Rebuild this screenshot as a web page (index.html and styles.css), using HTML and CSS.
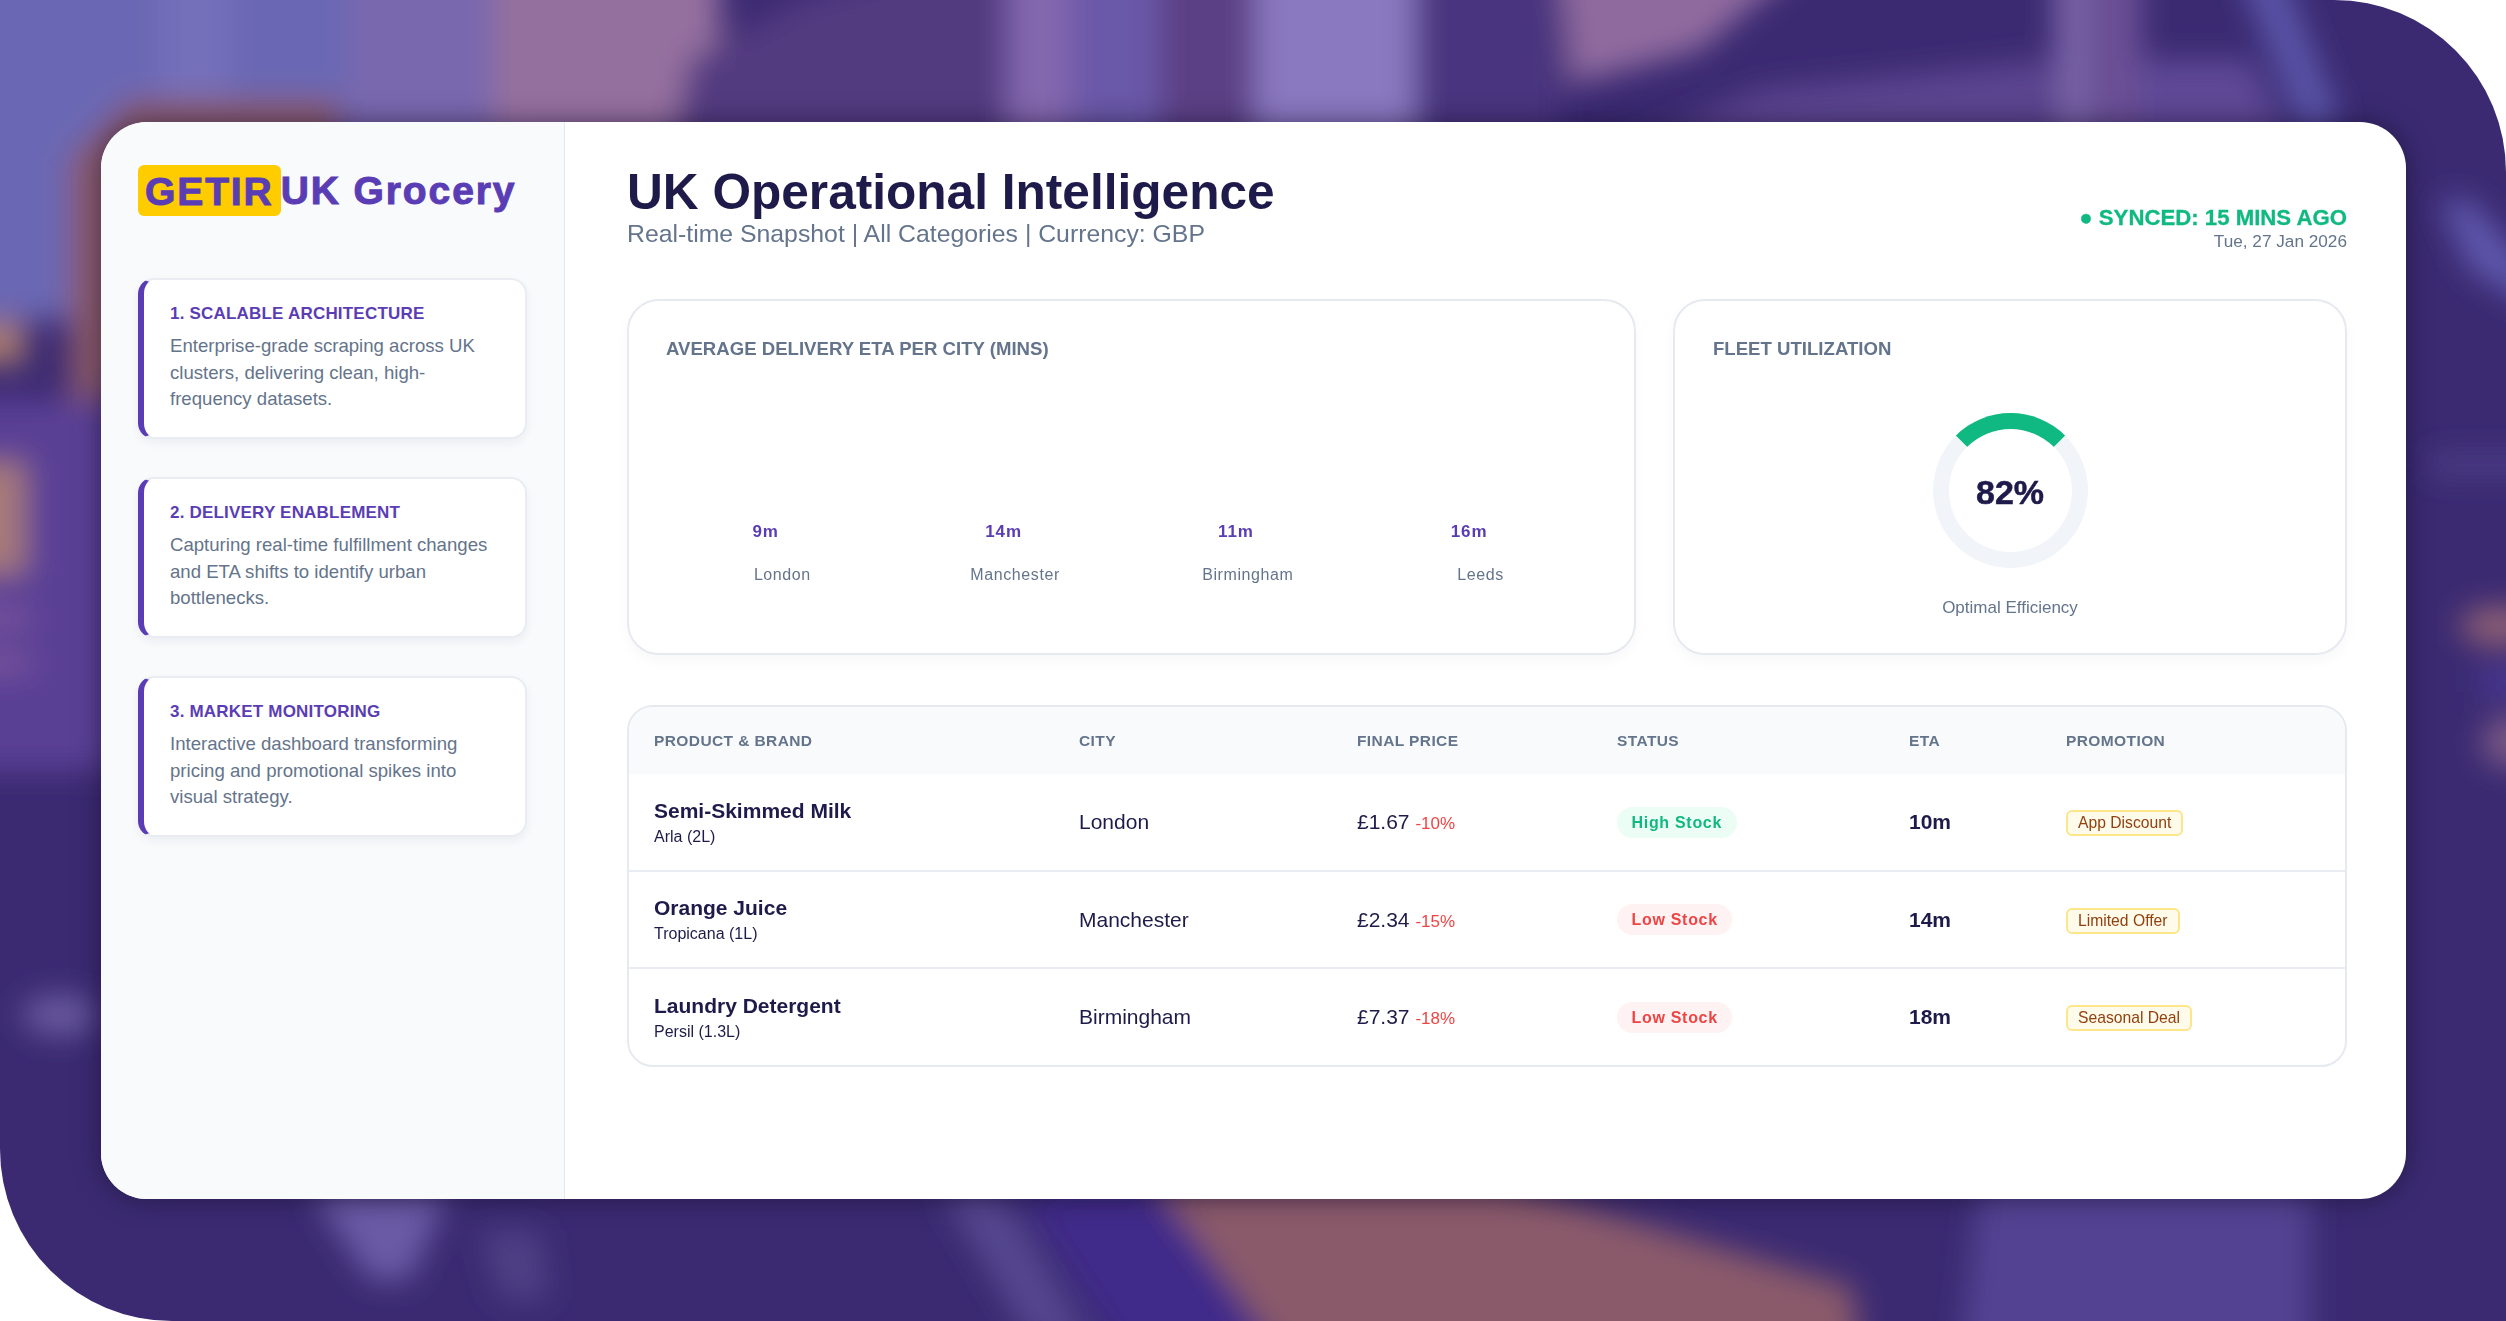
FILE: index.html
```html
<!DOCTYPE html>
<html lang="en">
<head>
  <meta charset="UTF-8">
  <meta name="viewport" content="width=device-width, initial-scale=1.0">
  <title>UK Operational Intelligence</title>
  <link rel="stylesheet" href="styles.css">
</head>
<body>
  <div class="frame">
    <!-- blurred photo behind the dashboard -->
    <svg class="backdrop" viewBox="0 0 2506 1321" preserveAspectRatio="none" aria-hidden="true">
      <defs>
        <filter id="soft" x="-5%" y="-5%" width="110%" height="110%"><feGaussianBlur stdDeviation="15"/></filter>
      </defs>
      <rect width="2506" height="1321" fill="#3b2a72"/>
      <g filter="url(#soft)">
        <rect x="-60" y="-60" width="570" height="380" fill="#6b67b4"/>
        <rect x="160" y="-60" width="70" height="250" fill="#7470ba"/>
        <rect x="350" y="-60" width="130" height="300" fill="#7a68ae"/>
        <rect x="490" y="-60" width="230" height="210" fill="#94709f"/>
        <polygon points="670,160 690,60 800,0 1000,-60 1000,160" fill="#523a80"/>
        <rect x="1005" y="-60" width="65" height="210" fill="#8468ae"/>
        <rect x="1070" y="-60" width="90" height="210" fill="#6a58a8"/>
        <rect x="1160" y="-60" width="95" height="210" fill="#5b4085"/>
        <rect x="1255" y="-60" width="160" height="210" fill="#8a78c0"/>
        <rect x="1415" y="-60" width="145" height="210" fill="#4a347f"/>
        <polygon points="1557,-60 1830,-60 1700,50 1570,85" fill="#8f6a9f"/>
        <polygon points="1600,160 1760,90 2050,60 2050,160" fill="#5c4590"/>
        <rect x="2055" y="-60" width="35" height="210" fill="#7c65a8"/>
        <rect x="2092" y="-60" width="50" height="210" fill="#6a4f95"/>
        <polygon points="2140,160 2140,60 2250,60 2300,160" fill="#5f4896"/>
        <polygon points="2225,-60 2270,-60 2340,120 2310,150" fill="#5a55a8"/>
        <polygon points="130,100 340,100 340,160 110,400 70,400 70,160" fill="#8a5a6a"/>
        <rect x="-60" y="322" width="85" height="42" fill="#a97c6e"/>
        <rect x="-60" y="400" width="180" height="370" fill="#5a4095"/>
        <rect x="-60" y="462" width="85" height="112" fill="#a87a78"/>
        <rect x="-60" y="612" width="90" height="12" fill="#8b5fa0"/>
        <rect x="-60" y="657" width="90" height="12" fill="#8b5fa0"/>
        <ellipse cx="60" cy="1015" rx="38" ry="20" fill="#6a5aa0"/>
        <polygon points="2440,200 2470,200 2540,280 2540,310 2470,270" fill="#5f59ad"/>
        <rect x="2430" y="455" width="120" height="20" fill="#4f4088"/>
        <ellipse cx="2500" cy="626" rx="40" ry="20" fill="#8f6075"/>
        <rect x="2480" y="670" width="70" height="24" fill="#4a3b9a"/>
        <ellipse cx="2510" cy="742" rx="28" ry="26" fill="#7a5a85"/>
        <polygon points="310,1190 450,1190 410,1280 370,1280" fill="#6a5aa5"/>
        <polygon points="480,1230 540,1230 550,1300 500,1300" fill="#4d3f85"/>
        <polygon points="940,1190 1000,1190 1090,1340 1030,1340" fill="#54478f"/>
        <polygon points="1020,1190 1160,1190 1280,1360 1130,1360" fill="#41298a"/>
        <polygon points="1151,1180 1495,1180 1853,1287 1860,1360 1285,1360" fill="#8a5a6a"/>
        <polygon points="1980,1180 2310,1180 2310,1360 1960,1360" fill="#534392"/>
      </g>
    </svg>

    <div class="dashboard">
      <aside class="sidebar">
        <div class="logo"><span class="logo-badge">GETIR</span><span class="logo-text">UK Grocery</span></div>

        <div class="note">
          <h3>1. Scalable Architecture</h3>
          <p>Enterprise-grade scraping across UK clusters, delivering clean, high-frequency datasets.</p>
        </div>
        <div class="note">
          <h3>2. Delivery Enablement</h3>
          <p>Capturing real-time fulfillment changes and ETA shifts to identify urban bottlenecks.</p>
        </div>
        <div class="note">
          <h3>3. Market Monitoring</h3>
          <p>Interactive dashboard transforming pricing and promotional spikes into visual strategy.</p>
        </div>
      </aside>

      <main class="main">
        <header class="top">
          <div>
            <h1>UK Operational Intelligence</h1>
            <div class="subtitle">Real-time Snapshot | All Categories | Currency: GBP</div>
          </div>
          <div class="sync">
            <div class="sync-status">● SYNCED: 15 MINS AGO</div>
            <div class="sync-date">Tue, 27 Jan 2026</div>
          </div>
        </header>

        <section class="panels">
          <div class="panel">
            <div class="panel-title">AVERAGE DELIVERY ETA PER CITY (MINS)</div>
            <div class="bars">
              <div class="bar"><span class="bar-val">9m</span><span class="bar-city">London</span></div>
              <div class="bar"><span class="bar-val">14m</span><span class="bar-city">Manchester</span></div>
              <div class="bar"><span class="bar-val">11m</span><span class="bar-city">Birmingham</span></div>
              <div class="bar"><span class="bar-val">16m</span><span class="bar-city">Leeds</span></div>
            </div>
          </div>
          <div class="panel panel-fleet">
            <div class="panel-title">FLEET UTILIZATION</div>
            <div class="gauge-wrap">
              <div class="gauge">82%</div>
              <div class="gauge-label">Optimal Efficiency</div>
            </div>
          </div>
        </section>

        <div class="table-card">
          <table>
            <thead>
              <tr>
                <th class="col-product">PRODUCT &amp; BRAND</th>
                <th class="col-city">CITY</th>
                <th class="col-price">FINAL PRICE</th>
                <th class="col-status">STATUS</th>
                <th class="col-eta">ETA</th>
                <th>PROMOTION</th>
              </tr>
            </thead>
            <tbody>
              <tr>
                <td><div class="product">Semi-Skimmed Milk</div><div class="brand">Arla (2L)</div></td>
                <td>London</td>
                <td>£1.67 <span class="off">-10%</span></td>
                <td><span class="pill pill-high">High Stock</span></td>
                <td class="eta">10m</td>
                <td><span class="promo">App Discount</span></td>
              </tr>
              <tr>
                <td><div class="product">Orange Juice</div><div class="brand">Tropicana (1L)</div></td>
                <td>Manchester</td>
                <td>£2.34 <span class="off">-15%</span></td>
                <td><span class="pill pill-low">Low Stock</span></td>
                <td class="eta">14m</td>
                <td><span class="promo">Limited Offer</span></td>
              </tr>
              <tr>
                <td><div class="product">Laundry Detergent</div><div class="brand">Persil (1.3L)</div></td>
                <td>Birmingham</td>
                <td>£7.37 <span class="off">-18%</span></td>
                <td><span class="pill pill-low">Low Stock</span></td>
                <td class="eta">18m</td>
                <td><span class="promo">Seasonal Deal</span></td>
              </tr>
            </tbody>
          </table>
        </div>
      </main>
    </div>
  </div>
</body>
</html>
```

FILE: styles.css
```css
* { margin: 0; padding: 0; box-sizing: border-box; }
body { font-family: "Liberation Sans", Arial, sans-serif; background: white; color: #1e1b4b; }

.frame {
  position: relative;
  width: 2506px;
  height: 1321px;
  padding: 122px 100px 122px 101px;
  overflow: hidden;
  border-top-right-radius: 172px;
  border-bottom-left-radius: 172px;
}

.backdrop {
  position: absolute;
  top: 0;
  left: 0;
  width: 100%;
  height: 100%;
}

.dashboard {
  position: relative;
  display: flex;
  height: 100%;
  background: white;
  border-radius: 46px;
  overflow: hidden;
  box-shadow: 0 0 26px rgba(20, 12, 40, 0.55);
  filter: blur(0.4px);
}

/* sidebar */
.sidebar {
  width: 464px;
  flex-shrink: 0;
  padding: 43px 37px;
  background: #f8fafc;
  border-right: 1px solid #e2e8f0;
}

.logo {
  display: flex;
  align-items: center;
  height: 51px;
  margin-bottom: 62px;
  font-size: 39px;
  font-weight: bold;
  letter-spacing: 1.9px;
  color: #5a3db5;
  -webkit-text-stroke: 1px #5a3db5;
  white-space: nowrap;
}

.logo-badge {
  display: block;
  height: 51px;
  line-height: 53px;
  margin-right: 0;
  padding: 0 7px;
  background: #ffcc00;
  border-radius: 6px;
}

.logo-text {
  line-height: 53px;
}

.note {
  height: 161px;
  margin-bottom: 38px;
  padding: 24px 22px 0 26px;
  background: white;
  border: 2px solid #e9edf3;
  border-left: 6px solid #5a3db5;
  border-radius: 16px;
  box-shadow: 0 4px 10px rgba(30, 27, 75, 0.06);
}

.note h3 {
  margin-bottom: 9px;
  font-size: 17px;
  font-weight: bold;
  letter-spacing: 0.2px;
  text-transform: uppercase;
  color: #5a3db5;
}

.note p {
  font-size: 18.6px;
  line-height: 26.5px;
  color: #64748b;
}

/* main column */
.main {
  flex: 1;
  padding: 42px 60px 0 62px;
}

.top {
  display: flex;
  justify-content: space-between;
  align-items: flex-start;
  height: 135px;
}

h1 {
  font-size: 49.6px;
  line-height: 56px;
  font-weight: bold;
  color: #1e1b4b;
}

.subtitle {
  font-size: 24.8px;
  line-height: 28px;
  color: #64748b;
}

.sync {
  margin-top: 41px;
  text-align: right;
}

.sync-status {
  font-size: 22.2px;
  line-height: 26px;
  font-weight: bold;
  color: #10b981;
  -webkit-text-stroke: 0.3px #10b981;
}

.sync-date {
  font-size: 17.2px;
  line-height: 20px;
  color: #64748b;
}

.panels {
  display: grid;
  grid-template-columns: 1009px 674px;
  gap: 37px;
  margin-bottom: 50px;
}

.panel {
  height: 356px;
  padding: 37px 37px 0;
  background: white;
  border: 2px solid #e6eaf0;
  border-radius: 32px;
  box-shadow: 0 6px 14px rgba(30, 27, 75, 0.03);
}

.panel-fleet {
  padding-left: 38px;
}

.panel-title {
  font-size: 18.6px;
  line-height: 22px;
  font-weight: bold;
  color: #64748b;
}

.bars {
  display: grid;
  grid-template-columns: repeat(4, 1fr);
  margin-top: 162px;
}

.bar {
  display: flex;
  flex-direction: column;
  align-items: center;
}

.bar-val {
  width: 60px;
  font-size: 17px;
  line-height: 20px;
  font-weight: bold;
  letter-spacing: 1px;
  color: #5a3db5;
  white-space: nowrap;
}

.bar-city {
  margin-top: 23px;
  font-size: 16px;
  line-height: 20px;
  letter-spacing: 0.6px;
  color: #64748b;
}

.gauge-wrap {
  display: flex;
  flex-direction: column;
  align-items: center;
  margin-top: 53px;
  margin-left: -1px;
}

.gauge {
  display: flex;
  align-items: center;
  justify-content: center;
  width: 155px;
  height: 155px;
  padding-top: 3px;
  border: 16px solid #f1f5f9;
  border-top-color: #10b981;
  border-radius: 50%;
  font-size: 34px;
  font-weight: bold;
  color: #1e1b4b;
  -webkit-text-stroke: 0.5px #1e1b4b;
}

.gauge-label {
  margin-top: 30px;
  font-size: 17px;
  line-height: 20px;
  color: #64748b;
}

/* table */
.table-card {
  height: 362px;
  border: 2px solid #e6eaf0;
  border-radius: 26px;
  overflow: hidden;
}

table {
  width: 100%;
  border-collapse: collapse;
  table-layout: fixed;
}

th {
  height: 67px;
  padding-left: 25px;
  text-align: left;
  font-size: 15.5px;
  font-weight: bold;
  letter-spacing: 0.4px;
  color: #64748b;
  background: #f8fafc;
}

.col-product { width: 425px; }
.col-city { width: 278px; }
.col-price { width: 260px; }
.col-status { width: 292px; }
.col-eta { width: 157px; }

td {
  height: 97px;
  padding-left: 25px;
  font-size: 21px;
  color: #1e1b4b;
  border-top: 2px solid #e9edf3;
}

tbody tr:first-child td { border-top: none; }

.product {
  font-size: 21px;
  line-height: 24px;
  font-weight: bold;
}

.brand {
  margin-top: 5px;
  font-size: 16px;
  line-height: 18px;
}

.off {
  font-size: 17px;
  color: #ef4444;
}

.pill {
  display: inline-block;
  height: 31px;
  line-height: 31px;
  padding: 0 14.5px;
  border-radius: 16px;
  font-size: 16px;
  font-weight: bold;
  letter-spacing: 0.7px;
}

.pill-high { background: #ecfdf5; color: #10b981; }
.pill-low { background: #fef2f2; color: #ef4444; }

.eta { font-weight: bold; }

.promo {
  display: inline-block;
  height: 26px;
  line-height: 22px;
  padding: 0 10px;
  margin-top: 2px;
  background: #fffbeb;
  border: 2px solid #fde68a;
  border-radius: 6px;
  font-size: 15.7px;
  color: #92400e;
}
```
